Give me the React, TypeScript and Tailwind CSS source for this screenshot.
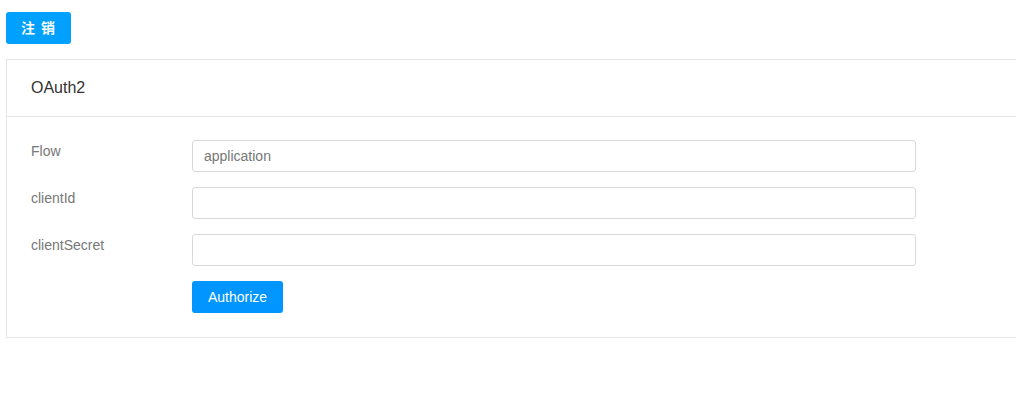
export default function App() {
  const fields = [
    { label: 'Flow', value: 'application' },
    { label: 'clientId', value: '' },
    { label: 'clientSecret', value: '' },
  ]

  return (
    <div className="min-h-[401px] bg-white font-['Liberation_Sans','Noto_Sans_CJK_SC',sans-serif]">
      <div className="pl-[6px] pt-[12px]">
        <button className="h-[32px] w-[65px] rounded-[3px] bg-[#00a0ff] text-[14px] font-bold tracking-[1px] text-white">
          注 销
        </button>
      </div>

      {/* OAuth2 card */}
      <div className="ml-[6px] mt-[15px] w-[1014px] border border-[#e6e6e6] bg-white">
        <div className="flex h-[57px] items-center border-b border-[#e6e6e6] px-[24px] text-[16px] text-[#333]">
          OAuth2
        </div>
        <div className="px-[24px] pt-[23px] pb-[24px]">
          {fields.map(f => (
            <div key={f.label} className="mb-[15px] flex">
              <label className="w-[161px] pt-[1px] text-[14px] text-[#777]">{f.label}</label>
              <input
                readOnly
                value={f.value}
                className="h-[32px] w-[724px] rounded-[3px] border border-[#d9d9d9] px-[11px] text-[14px] text-[#777] outline-none"
              />
            </div>
          ))}
          <div className="flex">
            <div className="w-[161px]" />
            <button className="h-[32px] w-[91px] rounded-[3px] bg-[#0095ff] text-[14px] font-medium text-white">
              Authorize
            </button>
          </div>
        </div>
      </div>
    </div>
  )
}
